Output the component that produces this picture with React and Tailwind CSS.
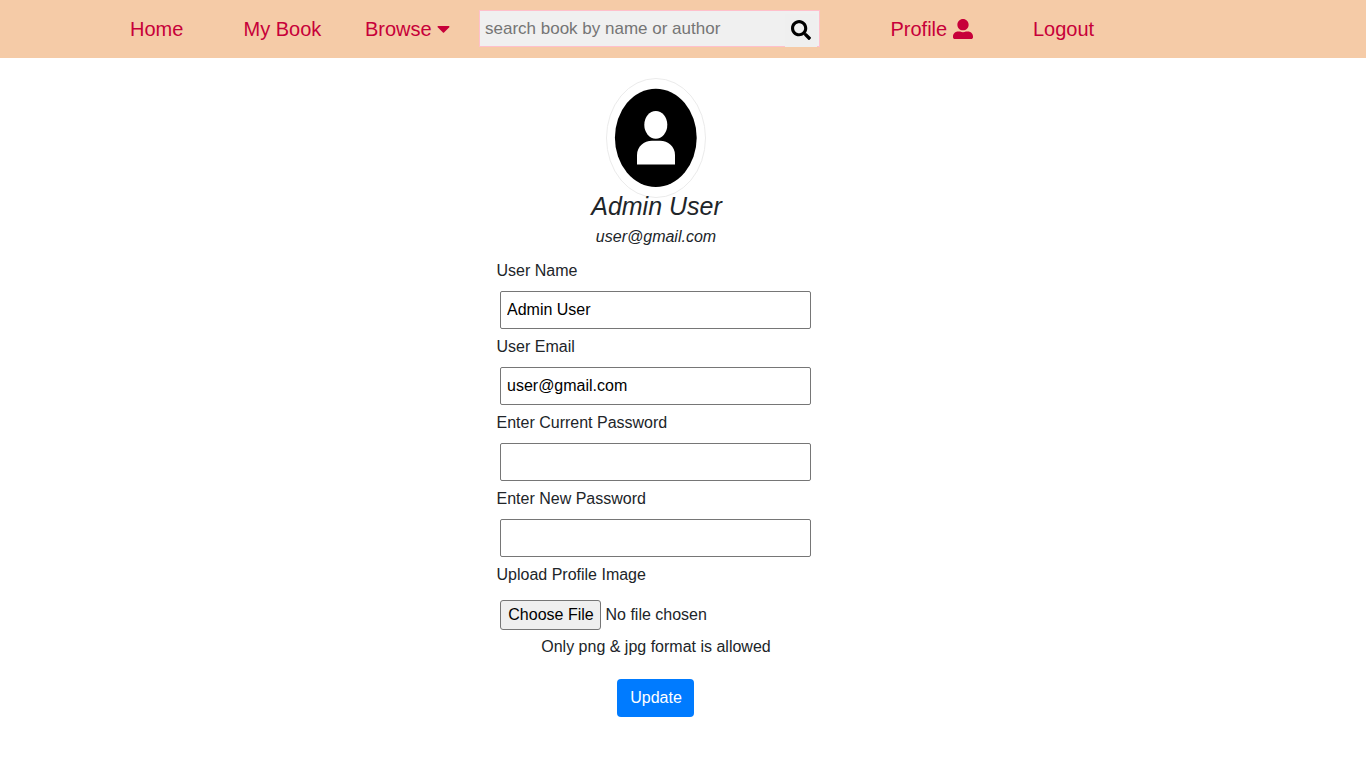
import { FaCaretDown, FaSearch, FaUserAlt } from "react-icons/fa";

const fields = [
  { label: "User Name", type: "text", value: "Admin User" },
  { label: "User Email", type: "text", value: "user@gmail.com" },
  { label: "Enter Current Password", type: "password", value: "" },
  { label: "Enter New Password", type: "password", value: "" },
];

function NavBar() {
  return (
    <nav className="flex h-[58px] items-center bg-[#f5cba7] pl-[130px] text-xl text-[#c70039]">
      <a className="w-[113.5px]">Home</a>
      <a className="w-[121.5px]">My Book</a>
      <a className="flex w-[114px] items-center">
        Browse
        <FaCaretDown className="mb-[2px] ml-[5.5px] h-[21px] w-[13px]" />
      </a>
      <div className="mb-px flex h-[37px] w-[341px] border border-[#ffc0cb] bg-[#f0f0f0]">
        <input
          className="w-[305px] pl-[5px] text-[17px] leading-6 outline-none placeholder:text-[#757575]"
          placeholder="search book by name or author"
        />
        <button className="mt-[3px] flex h-[33px] w-8 items-center justify-center bg-[#efefef] pb-px text-black">
          <FaSearch className="h-5 w-5" />
        </button>
      </div>
      <a className="ml-[70.5px] flex w-[142.5px] items-center">
        Profile
        <FaUserAlt className="ml-[6px] h-5 w-5" />
      </a>
      <a>Logout</a>
    </nav>
  );
}

function Avatar() {
  return (
    <svg className="h-[120px] w-[100px]" viewBox="0 0 100 120">
      <ellipse cx="50" cy="60" rx="49.5" ry="59.5" fill="#fff" stroke="#ebebeb" />
      <ellipse cx="49.8" cy="59.8" rx="40.9" ry="49.1" fill="#000" />
      <ellipse cx="49.8" cy="46.8" rx="11.5" ry="13.9" fill="#fff" />
      <path d="M31 86.5V77C31 68.5 38 62.7 46 62.7H54C62 62.7 69 68.5 69 77V86.5Z" fill="#fff" />
    </svg>
  );
}

export default function App() {
  return (
    <div className="min-h-[767px] bg-white font-['Liberation_Sans',Arial,sans-serif] text-base text-[#212529]">
      <NavBar />
      <main className="mx-auto flex w-[318px] -translate-x-[27px] flex-col pt-5">
        <header className="flex flex-col items-center italic">
          <Avatar />
          <h1 className="-mt-[7px] pl-px text-[25px] leading-[31px]">Admin User</h1>
          <p className="mt-[3px] leading-6">user@gmail.com</p>
        </header>
        <form className="mt-[10px]">
          {fields.map((f) => (
            <label key={f.label} className="block h-[76px]">
              <span className="-ml-[0.5px] block leading-6">{f.label}</span>
              <input
                type={f.type}
                defaultValue={f.value}
                className="mt-2 ml-[3px] block h-[38px] w-[311px] rounded-[2px] border border-[#767676] px-[6px] text-black"
              />
            </label>
          ))}
          <p className="-ml-[0.5px] leading-6">Upload Profile Image</p>
          <div className="mt-[13px] ml-[3px] flex h-[30px] items-center">
            <button type="button" className="h-[30px] w-[101px] rounded-[3px] border border-[#767676] bg-[#efefef] pl-px text-black">
              Choose File
            </button>
            <span className="ml-[4.5px]">No file chosen</span>
          </div>
          <p className="mt-[5px] text-center leading-6">Only png &amp; jpg format is allowed</p>
          <button type="button" className="mt-5 ml-[120px] block h-[38px] w-[77px] rounded bg-[#007bff] pl-px text-white">
            Update
          </button>
        </form>
      </main>
    </div>
  );
}
